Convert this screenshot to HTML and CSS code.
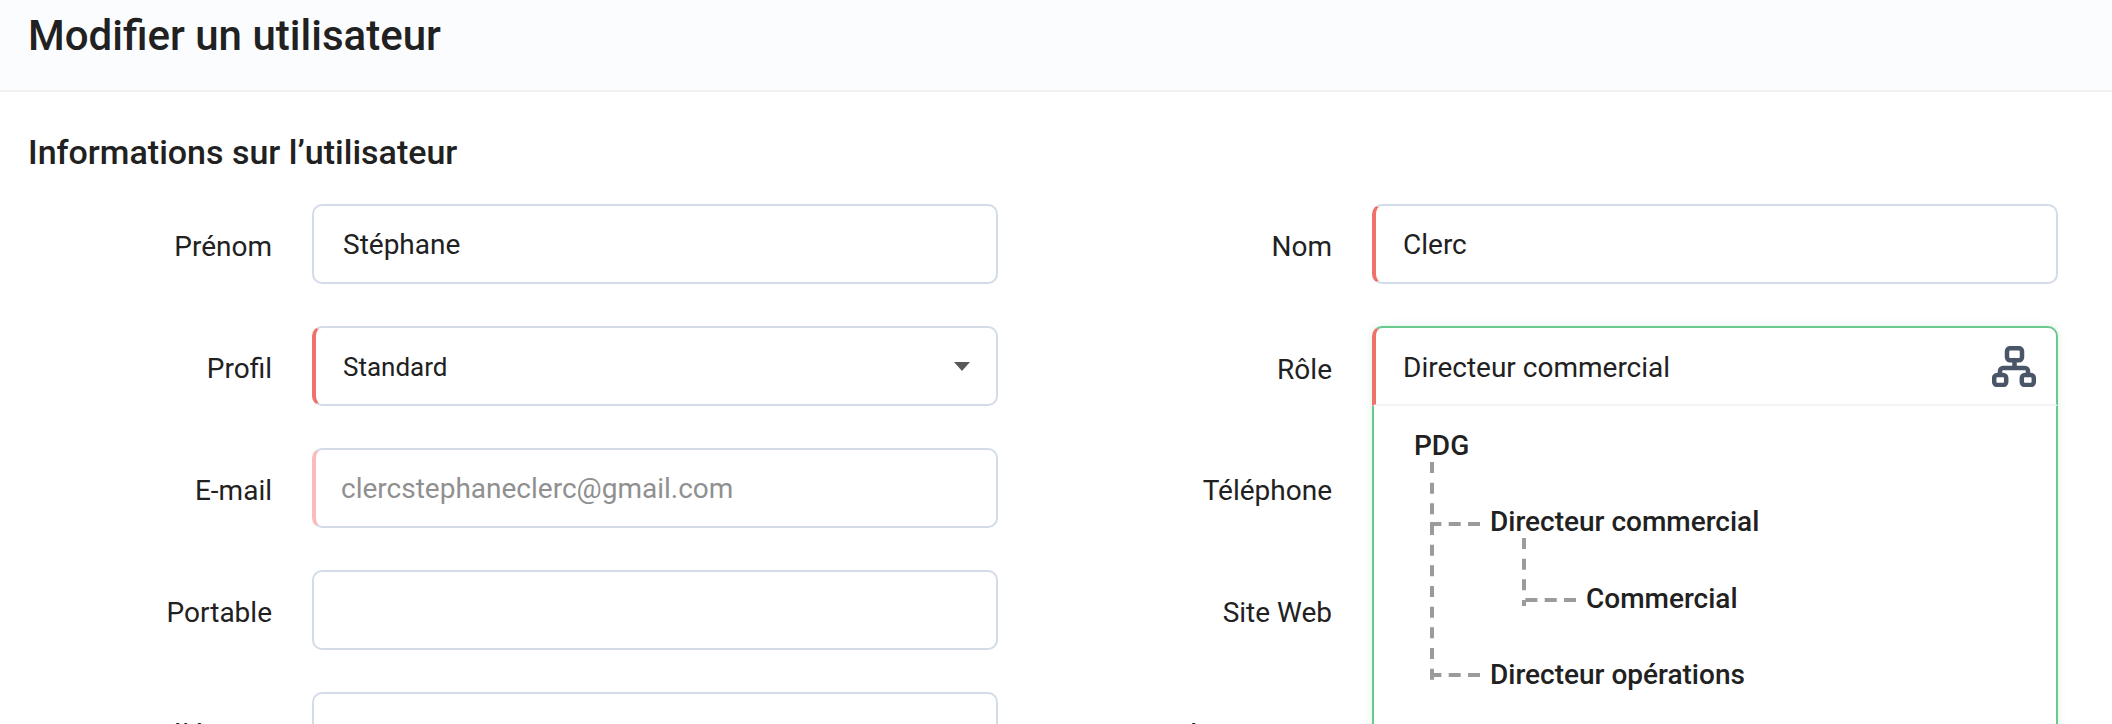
FILE: index.html
```html
<!DOCTYPE html>
<html lang="fr">
<head>
<meta charset="utf-8">
<title>Modifier un utilisateur</title>
<link rel="stylesheet" href="styles.css">
</head>
<body>
<header class="page-head"><h1>Modifier un utilisateur</h1></header>
<main class="content">
  <h2>Informations sur l’utilisateur</h2>
  <div class="form-grid">
    <div class="field"><label>Prénom</label><div class="input"><span class="value">Stéphane</span></div></div>
    <div class="field"><label>Nom</label><div class="input required"><span class="value">Clerc</span></div></div>

    <div class="field"><label>Profil</label><div class="input required"><span class="value select-value">Standard</span><span class="caret"></span></div></div>
    <div class="field role-field"><label>Rôle</label>
      <div class="role">
        <div class="role-head"><span>Directeur commercial</span>
          <svg class="org-icon" width="44" height="41" viewBox="0 0 44 41" fill="none" stroke="#4a5568" stroke-width="4.500" stroke-linejoin="round" stroke-linecap="round"><rect x="15" y="2.200" width="15" height="12" rx="3"/><rect x="2.200" y="29" width="12" height="10" rx="3"/><rect x="29.800" y="29" width="12" height="10" rx="3"/><path d="M22.500 14V22M8 29V25a3 3 0 0 1 3-3H33a3 3 0 0 1 3 3V29"/></svg>
        </div>
        <div class="role-tree">
          <svg class="lines" width="150" height="222" viewBox="0 0 150 222" fill="none" stroke="#9b9b9b" stroke-width="4"><path class="v" d="M2 0V220"/><path class="h" d="M50 62H0"/><path class="h" d="M50 213H0"/><path class="v" d="M94 76V144"/><path class="h" d="M146 138H92"/></svg>
          <div class="node">PDG</div>
          <div class="node n1">Directeur commercial</div>
          <div class="node n2">Commercial</div>
          <div class="node n1">Directeur opérations</div>
        </div>
      </div>
    </div>

    <div class="field"><label>E-mail</label><div class="input required muted"><span class="value placeholder">clercstephaneclerc@gmail.com</span></div></div>
    <div class="field"><label>Téléphone</label></div>

    <div class="field"><label>Portable</label><div class="input"></div></div>
    <div class="field"><label>Site Web</label></div>

    <div class="field"><label>Télécopie</label><div class="input"></div></div>
    <div class="field"><label>Mémo interne</label></div>
  </div>
</main>
</body>
</html>
```
FILE: styles.css
```css
* { box-sizing: border-box; }
html, body { margin: 0; height: 724px; overflow: hidden; background: #fff; }
body { font-family: Roboto, "Liberation Sans", sans-serif; color: #212121; }
.page-head { height: 92px; background: #fbfcfe; border-bottom: 2px solid #eff0f2; padding: 0 28px; }
h1 { margin: 0; font-size: 42px; line-height: 72px; font-weight: 500; }
.content { padding: 42px 28px 0; }
h2 { margin: 0 0 34px; font-size: 34px; line-height: 36px; font-weight: 500; }
.form-grid { display: grid; grid-template-columns: 970px 1058px; grid-auto-rows: 80px; row-gap: 42px; }
.field { display: flex; align-items: center; gap: 40px; }
.field label { width: 244px; flex: none; text-align: right; font-size: 28px; padding-top: 5px; }
.field:nth-child(even) label { width: 334px; }
.input { flex: none; width: 686px; height: 80px; display: flex; align-items: center; justify-content: space-between; border: 2px solid #d3dbe7; border-radius: 10px; background: #fff; padding: 0 26px 0 29px; font-size: 28px; }
.required { border-left: 4px solid #ef716c; padding-left: 27px; }
.muted { border-left-color: #f9bcba; }
.select-value { font-size: 26px; padding-top: 2px; }
.placeholder { color: #909090; margin-left: -2px; }
.caret { width: 0; height: 0; border-left: 8px solid transparent; border-right: 8px solid transparent; border-top: 9px solid #58585a; }
.role-field { align-items: flex-start; position: relative; z-index: 2; }
.role-field label { padding-top: 27px; }
.role { flex: none; width: 686px; height: 600px; background: #fff; border-radius: 10px 10px 0 0; box-shadow: 0 0 10px rgba(99,195,137,.2); font-size: 28px; }
.role-head { height: 80px; display: flex; align-items: center; justify-content: space-between; padding: 0 20px 0 27px; border: 2px solid #68c88e; border-left: 4px solid #ef716c; border-bottom: 2px solid #f2f5f8; border-radius: 10px 10px 0 0; }
.role-head span { padding-top: 3px; }
.org-icon { flex: none; }
.role-tree { position: relative; height: 520px; padding: 25px 0 0 40px; border: 2px solid #68c88e; border-width: 0 2px; font-weight: 500; }
.lines { position: absolute; left: 56px; top: 56px; }
.lines .v { stroke-dasharray: 11 9.670; }
.lines .h { stroke-dasharray: 12 7.300; }
.node { height: 76.330px; line-height: 30px; }
.n1 { margin-left: 76px; }
.n2 { margin-left: 172px; }
```
